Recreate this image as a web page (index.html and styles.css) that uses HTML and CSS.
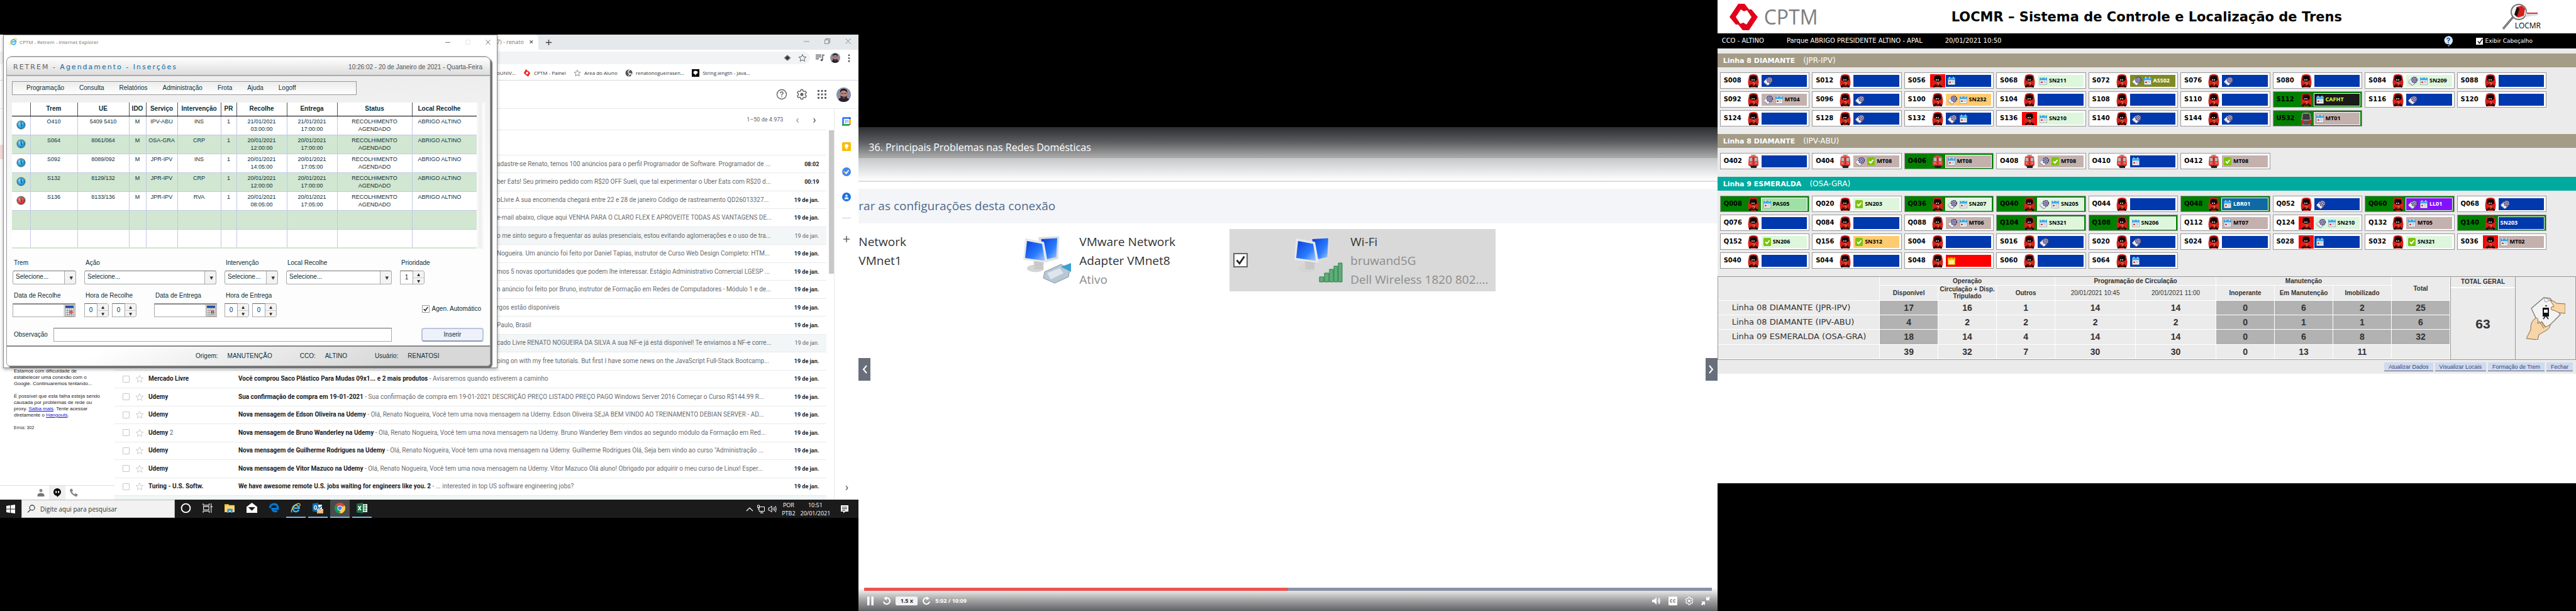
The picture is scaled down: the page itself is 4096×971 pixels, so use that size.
FILE: index.html
```html
<!DOCTYPE html>
<html lang="pt-BR">
<head>
<meta charset="utf-8">
<title>CCO Altino</title>
<link rel="stylesheet" href="styles.css">
</head>
<body>
<svg class="defs" aria-hidden="true">
  <defs>
    <linearGradient id="gScreen" x1="0" y1="0" x2="1" y2="1"><stop offset="0" stop-color="#0a3fd8"/><stop offset=".6" stop-color="#2a7cff"/><stop offset="1" stop-color="#a9cbff"/></linearGradient>
    <radialGradient id="gBlue" cx=".4" cy=".35"><stop offset="0" stop-color="#8fe0ff"/><stop offset="1" stop-color="#1796dc"/></radialGradient>
    <radialGradient id="gRed" cx=".4" cy=".35"><stop offset="0" stop-color="#ff9a94"/><stop offset="1" stop-color="#e02a25"/></radialGradient>
  </defs>
  <symbol id="train" viewBox="0 0 18 21"><path d="M2 3Q3 0 9 0T16 3L17.500 12 17 18 15 21H3L1 18 .5 12Z" fill="#d8201a"/><path d="M4 3Q9 1 14 3L15 9Q9 14 3 9Z" fill="#160404"/><path d="M4 16H14L13 20H5Z" fill="#4d0a08"/><path d="M2 18H5V21H2ZM13 18H16V21H13Z" fill="#111"/><path d="M6 9H12" stroke="#eee" stroke-width="1.500" stroke-dasharray="2 1"/><path d="M7.500 13.500H10.500V17H8" stroke="#d98a52" stroke-width="1" fill="none"/></symbol>
  <symbol id="oldtrain" viewBox="0 0 18 21"><path d="M5 .5H13M9 0V2" stroke="#666"/><path d="M2 3Q9 0 16 3L17 12V17H1V12Z" fill="#e2463d"/><path d="M3 5H7V10H3ZM11 5H15V10H11Z" fill="#a9bfca"/><path d="M8 4H10V17H8Z" fill="#b3322b"/><path d="M2 17H16L14 19V21H5V19Z" fill="#26211f"/><path d="M3 13H6M12 13H15" stroke="#f5c0b8"/></symbol>
  <symbol id="greytrain" viewBox="0 0 18 21"><path d="M2 2Q9-1 16 2L17 12V18L15 21H3L1 18V12Z" fill="#8b8585"/><path d="M4 3H14L15 12H3Z" fill="#3a3838"/><path d="M1 13H5V19H1ZM13 13H17V19H13Z" fill="#d8211c"/><path d="M5 14H13V20H5Z" fill="#555"/></symbol>
  <symbol id="tool" viewBox="0 0 16 15"><path d="M0 9 7 2 14 8 7 15Z" fill="#ececf4" stroke="#777" stroke-width=".6"/><path d="M1 10.500 7 15 13 9.500" fill="none" stroke="#8a8a96"/><circle cx="10" cy="6" r="4.300" fill="#a79fd8" stroke="#3b3660" stroke-width="1.800" stroke-dasharray="2 1"/><circle cx="10" cy="6" r="1.500" fill="#f0f0ff" stroke="#37325c"/></symbol>
  <symbol id="cal" viewBox="0 0 12 13"><path d="M.5 2H11.500V12.500H.5Z" fill="#f1f4f6" stroke="#8b9aa3" stroke-width=".7"/><path d="M0 1.500H12V5.500H0Z" fill="#38a7e6"/><path d="M3 0V3M9 0V3" stroke="#dff3ff" stroke-width="1.200"/><path d="M2 7.500H5V10H2Z" fill="#e23a33"/><path d="M6 7.500H10M6 9.500H10" stroke="#aab4bb"/></symbol>
  <symbol id="ycal" viewBox="0 0 12 13"><path d="M.5 2H11.500V12.500H.5Z" fill="#ffe34a" stroke="#d99f00"/><path d="M0 1.500H12V5H0Z" fill="#f4b400"/><path d="M3 0V3M9 0V3" stroke="#6b5a2a" stroke-width="1.300"/><path d="M2 7.500H10M2 10H10M4.500 6V12M7.500 6V12" stroke="#fff7c0"/></symbol>
  <symbol id="check" viewBox="0 0 12 13"><rect width="12" height="13" rx="1.500" fill="#7cc30d"/><path d="M3 6.500 5.500 9 9.500 4" fill="none" stroke="#fff" stroke-width="2"/></symbol>
  <symbol id="star" viewBox="0 0 14 14"><path d="M7 1.500 8.700 5.300 12.800 5.700 9.700 8.400 10.600 12.400 7 10.300 3.400 12.400 4.300 8.400 1.200 5.700 5.300 5.300Z" fill="none" stroke="currentColor"/></symbol>
  <symbol id="clock" viewBox="0 0 16 16"><circle cx="8" cy="8" r="7" stroke="#5b7480" stroke-width="1.200"/><path d="M8 3.500V8L10 10" fill="none" stroke="#16323f" stroke-width="1.300"/><path d="M8 1.800V3M8 13V14.200M1.800 8H3M13 8H14.200" stroke="#16323f" stroke-width=".8"/></symbol>
  <symbol id="face" viewBox="0 0 24 24"><circle cx="12" cy="12" r="12" fill="#8d8fa6"/><path d="M3 20Q5 17 9 17H15Q19 17 21 20A12 12 0 0 1 3 20Z" fill="#26242f"/><ellipse cx="12" cy="11" rx="5.500" ry="8" fill="#b98575"/><path d="M6 10Q5 2 12 2T18 10Q17 5 12 5T6 10Z" fill="#17131a"/><path d="M6.500 13Q7 21 12 21T17.500 13Q16 16 12 15.500T6.500 13Z" fill="#2a1c1f"/><path d="M8 10H11M13 10H16" stroke="#2a1c1f"/><path d="M10 17.500H14" stroke="#c9877b"/></symbol>
  <symbol id="ie" viewBox="0 0 20 20"><path d="M15.500 13A6 6 0 1 1 16 10H6" fill="none" stroke="#3fb3ea" stroke-width="3"/><path d="M2.500 18C-1 15 8 1 16 1.500 18.500 2 18 5 17 6.500" fill="none" stroke="#f2c230" stroke-width="1.500"/></symbol>
  <symbol id="pcs" viewBox="0 0 40 40"><ellipse cx="13" cy="35" rx="9" ry="4" fill="#d5d5d5"/><path d="M11 27H22L21 36H12Z" fill="#c9c9c9"/><path d="M16 2 38 1 37 25 20 29Z" fill="#dcdcdc"/><path d="M19 4 36 3 35 23 22 26Z" fill="url(#gScreen)"/><path d="M2 3 22 7 26 29 0 26Z" fill="#e9e9e9"/><path d="M4 6 20 9 23 27 2 24Z" fill="url(#gScreen)"/></symbol>
  <symbol id="help" viewBox="0 0 18 18"><circle cx="9" cy="9" r="7.500" fill="none" stroke="#5f6368" stroke-width="1.400"/><path d="M6.800 7.200Q7 5 9 5T11.200 7Q11.200 8.200 9 9.500V10.800M9 12V13.400" fill="none" stroke="#5f6368" stroke-width="1.400"/></symbol>
  <symbol id="gear" viewBox="0 0 18 18"><path d="M7.500 1.500H10.500L11 3.700 12.600 4.600 14.700 3.900 16.200 6.500 14.500 8V10L16.200 11.500 14.700 14.100 12.600 13.400 11 14.300 10.500 16.500H7.500L7 14.300 5.400 13.400 3.300 14.100 1.800 11.500 3.500 10V8L1.800 6.500 3.300 3.900 5.400 4.600 7 3.700Z" fill="none" stroke="currentColor" stroke-width="1.400"/><circle cx="9" cy="9" r="2.600" fill="currentColor"/></symbol>
</svg>

<main class="wall">

<section class="pane left">
  <div class="desktop">
    <div class="tabs">
      <div class="tab"><span class="tabname">37) - renato</span><button class="bare tabx" aria-label="Fechar guia">✕</button></div>
      <button class="bare newtab" aria-label="Nova guia"><svg viewBox="0 0 12 12"><path d="M6 1V11M1 6H11" stroke="#444" stroke-width="1.500"/></svg></button>
      <div class="winbtns">
        <svg viewBox="0 0 10 10"><path d="M0 5.500H10" stroke="#888"/></svg>
        <svg viewBox="0 0 10 10"><path d="M.5 2.500H7.500V9.500H.5ZM2.500 2.500V.5H9.500V7.500H7.500" fill="none" stroke="#777"/></svg>
        <svg viewBox="0 0 10 10"><path d="M.5.5 9.500 9.500M9.500.5.5 9.500" stroke="#777"/></svg>
      </div>
    </div>
    <div class="omni">
      <div class="url">
        <svg viewBox="0 0 12 12"><path d="M6 1 11.500 6 6 11 .5 6Z" fill="#777"/><circle cx="6" cy="6" r="2.500" fill="#333"/><path d="M3 3 6 0 9 3M3 9 6 12 9 9" stroke="#fff" fill="none" stroke-width=".7"/></svg>
        <svg class="dark" viewBox="0 0 14 14"><use href="#star"/></svg>
      </div>
      <svg class="m" viewBox="0 0 14 12"><path d="M0 1.500H9M0 4.500H9M0 7.500H5M11 9V1.500H14" stroke="#555" stroke-width="1.400" fill="none"/><circle cx="9.500" cy="9.500" r="1.800" fill="#555"/></svg>
      <svg class="av"><use href="#face"/></svg>
      <svg class="dots" viewBox="0 0 4 14"><circle cx="2" cy="2" r="1.400"/><circle cx="2" cy="7" r="1.400"/><circle cx="2" cy="12" r="1.400"/></svg>
    </div>
    <nav class="marks">
      <a href="#">oUNIV...</a>
      <a href="#"><svg viewBox="0 0 14 14"><path d="M5 0 1 7 5 11H8L4.500 7 8 3ZM9 14 13 7 9 3H6L9.500 7 6 11Z" fill="#e22"/></svg>CPTM - Painel</a>
      <a href="#" class="gry"><svg><use href="#star"/></svg>Area do Aluno</a>
      <a href="#"><svg viewBox="0 0 14 14"><circle cx="7" cy="7" r="6.500" fill="#555"/><path d="M9 2Q5 3 6 6T9 8 6 12M10 8Q13 9 11 11" stroke="#fff" fill="none" stroke-width="1.500"/></svg>renatonogueirasen...</a>
      <a href="#"><svg viewBox="0 0 14 14"><path d="M0 0H14V14H0Z"/><path d="M3 6Q3 3 7 3T11 6Q11 8 8.500 8.500L7 12 6 9Q3 9 3 6Z" fill="#fff"/></svg>String.length - Java...</a>
    </nav>
    <div class="ghead">
      <svg><use href="#help"/></svg>
      <svg class="dark"><use href="#gear"/></svg>
      <svg viewBox="0 0 18 18"><g fill="#5f6368"><path d="M2 2H5V5H2ZM7.500 2H10.500V5H7.500ZM13 2H16V5H13ZM2 7.500H5V10.500H2ZM7.500 7.500H10.500V10.500H7.500ZM13 7.500H16V10.500H13ZM2 13H5V16H2ZM7.500 13H10.500V16H7.500ZM13 13H16V16H13Z"/></g></svg>
      <svg class="big"><use href="#face"/></svg>
    </div>
    <div class="gbody">
      <aside class="gside">
        <div class="inbox"></div>
        <div class="hang">
          <p>Estamos com dificuldade de estabelecer uma conexão com o Google. Continuaremos tentando...</p>
          <p>É possível que esta falha esteja sendo causada por problemas de rede ou proxy. <a href="#">Saiba mais</a>. Tente acessar diretamente o <a href="#">Hangouts</a>.</p>
          <p class="err">Erros: 302</p>
        </div>
        <div class="gtabs">
          <svg viewBox="0 0 14 14"><circle cx="7" cy="3.500" r="2.500" fill="#888"/><path d="M1.500 13V11Q1.500 7.500 7 7.500T12.500 11V13Z" fill="#777"/></svg>
          <span class="on"><svg viewBox="0 0 14 14"><circle cx="7" cy="6" r="6"/><path d="M6 11H10L7 14Z"/><path d="M4 4.500H6V7L4.800 8.300M8 4.500H10V7L8.800 8.300" fill="#fff" stroke="#fff" stroke-width=".5"/></svg></span>
          <svg viewBox="0 0 14 14"><path d="M2 1 4.500.5 6 4 4.500 5.500Q6 8.500 8.500 9.500L10 8 13.500 9.500 13 12Q12 13.500 10 13 3 10 1 3.500 1 2 2 1Z" fill="#888"/></svg>
        </div>
      </aside>
      <div class="mail">
        <div class="pager"><span>1–50 de 4.973</span><button class="bare lite" aria-label="Anterior">‹</button><button class="bare" aria-label="Próxima">›</button></div>
        <div class="blank"></div>
        <div class="rows">
          <div class="row under"><p>adastre-se Renato, temos 100 anúncios para o perfil Programador de Software. Programador de ...</p><time>08:02</time></div>
          <div class="row under"><p>ber Eats! Seu primeiro pedido com R$20 OFF Sueli, que tal experimentar o Uber Eats com R$20 d...</p><time>00:19</time></div>
          <div class="row under"><p>oLivre A sua encomenda chegará entre 22 e 28 de janeiro Código de rastreamento QD26013327...</p><time>19 de jan.</time></div>
          <div class="row under"><p>e-mail abaixo, clique aqui VENHA PARA O CLARO FLEX E APROVEITE TODAS AS VANTAGENS DE...</p><time>19 de jan.</time></div>
          <div class="row under read"><p>o me sinto seguro a frequentar as aulas presenciais, estou evitando aglomerações e o uso de tra...</p><time>19 de jan.</time></div>
          <div class="row under"><p>Nogueira. Um anúncio foi feito por Daniel Tapias, instrutor de Curso Web Design Completo: HTM...</p><time>19 de jan.</time></div>
          <div class="row under"><p>mos 5 novas oportunidades que podem lhe interessar. Estágio Administrativo Comercial LGESP ...</p><time>19 de jan.</time></div>
          <div class="row under"><p>n anúncio foi feito por Bruno, instrutor de Formação em Redes de Computadores - Módulo 1 e de...</p><time>19 de jan.</time></div>
          <div class="row under"><p>rgos estão disponíveis</p><time>19 de jan.</time></div>
          <div class="row under"><p>Paulo, Brasil</p><time>19 de jan.</time></div>
          <div class="row under read"><p>cado Livre RENATO NOGUEIRA DA SILVA A sua NF-e já está disponível! Te enviamos a NF-e corre...</p><time>19 de jan.</time></div>
          <div class="row under"><p>oing on with my free tutorials. But first I have some news on the JavaScript Full-Stack Bootcamp...</p><time>19 de jan.</time></div>
          <div class="row"><input type="checkbox" aria-label="Mercado Livre"><svg><use href="#star"/></svg><b>Mercado Livre</b><p><b>Você comprou Saco Plástico Para Mudas 09x1... e 2 mais produtos</b> - Avisaremos quando estiverem a caminho</p><time>19 de jan.</time></div>
          <div class="row"><input type="checkbox" aria-label="Udemy, confirmação"><svg><use href="#star"/></svg><b>Udemy</b><p><b>Sua confirmação de compra em 19-01-2021</b> - Sua confirmação de compra em 19-01-2021 DESCRIÇÃO PREÇO LISTADO PREÇO PAGO Windows Server 2016 Começar o Curso R$144.99 R...</p><time>19 de jan.</time></div>
          <div class="row"><input type="checkbox" aria-label="Udemy, Edson"><svg><use href="#star"/></svg><b>Udemy</b><p><b>Nova mensagem de Edson Oliveira na Udemy</b> - Olá, Renato Nogueira, Você tem uma nova mensagem na Udemy. Edson Oliveira SEJA BEM VINDO AO TREINAMENTO DEBIAN SERVER - AD...</p><time>19 de jan.</time></div>
          <div class="row"><input type="checkbox" aria-label="Udemy, Bruno"><svg><use href="#star"/></svg><b>Udemy <i>2</i></b><p><b>Nova mensagem de Bruno Wanderley na Udemy</b> - Olá, Renato Nogueira, Você tem uma nova mensagem na Udemy. Bruno Wanderley Bem vindos ao segundo módulo da Formação em Red...</p><time>19 de jan.</time></div>
          <div class="row"><input type="checkbox" aria-label="Udemy, Guilherme"><svg><use href="#star"/></svg><b>Udemy</b><p><b>Nova mensagem de Guilherme Rodrigues na Udemy</b> - Olá, Renato Nogueira, Você tem uma nova mensagem na Udemy. Guilherme Rodrigues Olá, Seja bem vindo ao curso "Administração ...</p><time>19 de jan.</time></div>
          <div class="row"><input type="checkbox" aria-label="Udemy, Vitor"><svg><use href="#star"/></svg><b>Udemy</b><p><b>Nova mensagem de Vitor Mazuco na Udemy</b> - Olá, Renato Nogueira, Você tem uma nova mensagem na Udemy. Vitor Mazuco Olá aluno! Obrigado por adquirir o meu curso de Linux! Esper...</p><time>19 de jan.</time></div>
          <div class="row"><input type="checkbox" aria-label="Turing"><svg><use href="#star"/></svg><b>Turing - U.S. Softw.</b><p><b>We have awesome remote U.S. jobs waiting for engineers like you. 2</b> - ... interested in top US software engineering jobs?</p><time>19 de jan.</time></div>
        </div>
      </div>
      <div class="scroll"><div class="thumb"></div></div>
      <aside class="apps">
        <svg viewBox="0 0 14 14"><path d="M0 1.500 1.500 0H11V14H0Z" fill="#4285f4"/><path d="M11 0H12.500L14 1.500V3H11Z" fill="#1967d2"/><path d="M11 3H14V11H11Z" fill="#fbbc04"/><path d="M0 11H11V14H1.500L0 12.500Z" fill="#34a853"/><path d="M11 11H14L11 14Z" fill="#ea4335"/><path d="M3 3H11V11H3Z" fill="#fff"/><path d="M4.500 5H6.500V9H4.500M5 7H6.500M8 5.500 9.200 5V9.500" fill="none" stroke="#4285f4" stroke-width=".9"/></svg>
        <svg viewBox="0 0 14 14"><rect width="14" height="14" rx="1.500" fill="#fbbc04"/><circle cx="7" cy="6" r="3" fill="#fff"/><path d="M5.500 8H8.500V9.500H5.500ZM5.500 10.300H8.500V11.300H5.500Z" fill="#fff"/></svg>
        <svg viewBox="0 0 14 14"><circle cx="7" cy="7" r="7" fill="#4285f4"/><circle cx="3.500" cy="7" r="1.500" fill="#fbbc04"/><path d="M5 8 6.500 9.500 10.500 4.500" fill="none" stroke="#fff" stroke-width="2"/></svg>
        <svg viewBox="0 0 14 14"><circle cx="7" cy="7" r="7" fill="#1a73e8"/><circle cx="7" cy="5" r="1.800" fill="#fff"/><path d="M3.500 10.500Q3.500 7.500 7 7.500T10.500 10.500Z" fill="#fff"/></svg>
        <hr>
        <svg viewBox="0 0 14 14"><path d="M7 2V12M2 7H12" stroke="#5f6368" stroke-width="1.500"/></svg>
        <button class="bare more" aria-label="Mostrar painel">›</button>
      </aside>
    </div>
    <footer class="task">
      <svg class="win" viewBox="0 0 14 14"><path d="M0 2 6 1V6.500H0ZM7 .9 14 0V6.500H7ZM0 7.500H6V13L0 12ZM7 7.500H14V14L7 13.100Z" fill="#fff"/></svg>
      <div class="find"><svg viewBox="0 0 12 12"><circle cx="7.500" cy="4.500" r="3.700" fill="none" stroke="#222"/><path d="M5 7.500 1 11.500" stroke="#222"/></svg><input type="text" aria-label="Pesquisar" value="Digite aqui para pesquisar"></div>
      <span class="ti"><svg viewBox="0 0 16 16"><circle cx="8" cy="8" r="6.500" fill="none" stroke="#fff" stroke-width="1.800"/></svg></span>
      <span class="ti"><svg viewBox="0 0 16 16"><path d="M1 1V3.500H10V1M1 15V12.500H10V15M1.500 5.500H9.500V10.500H1.500ZM13 1V15M12 6H15" fill="none" stroke="#fff"/></svg></span>
      <span class="ti"><svg viewBox="0 0 16 16"><path d="M0 2H6L7 3.500H15V14H0Z" fill="#f6c443"/><path d="M1 5H15V14H1Z" fill="#ffd869"/><path d="M4 9H12V15H9.500V12H6.500V15H4Z" fill="#3b97e0"/></svg></span>
      <span class="ti"><svg viewBox="0 0 16 16"><path d="M0 6 8 0 16 6V15H0Z" fill="#fff"/><path d="M2.500 6.500H13L8 12Z" fill="#1b1b1b"/></svg></span>
      <span class="ti"><svg viewBox="0 0 16 16"><path d="M2 8Q3 2 8.500 2T14 9H5.500Q6 14 13 12.500" fill="none" stroke="#0078d7" stroke-width="3"/></svg></span>
      <span class="ti run"><svg><use href="#ie"/></svg></span>
      <span class="ti run"><svg viewBox="0 0 17 17"><path d="M7 3H15V13H7Z" fill="#fff"/><path d="M8 6 11 9 15 5" stroke="#0072c6" fill="none" stroke-width="1.500"/><path d="M0 1.500 9 0V15L0 13.500Z" fill="#0072c6"/><ellipse cx="4.500" cy="7.500" rx="2" ry="2.800" fill="none" stroke="#fff" stroke-width="1.300"/><path d="M7 10H17V17H7Z" fill="#e9b06d"/><path d="M7 10 12 14.500 17 10" stroke="#fff" fill="none"/></svg></span>
      <span class="ti run act"><svg viewBox="0 0 16 16"><path d="M8 8 1 4A8 8 0 0 1 15 4Z" fill="#db4437"/><path d="M8 8V16A8 8 0 0 1 1 4Z" fill="#0f9d58"/><path d="M8 8 15 4A8 8 0 0 1 8 16Z" fill="#ffcd40"/><circle cx="8" cy="8" r="3.700" fill="#fff"/><circle cx="8" cy="8" r="2.900" fill="#4285f4"/></svg></span>
      <span class="ti run"><svg viewBox="0 0 16 16"><path d="M8 2H16V14H8Z" fill="#fff"/><path d="M10 4H15M10 6.500H15M10 9H15M10 11.500H15M12.500 3V13" stroke="#1e7145"/><path d="M0 1.500 9.500 0V16L0 14.500Z" fill="#1e7145"/><path d="M2.500 5 6.500 11M6.500 5 2.500 11" stroke="#fff" stroke-width="1.500"/></svg></span>
      <div class="tray">
        <svg viewBox="0 0 14 14"><path d="M2 10 7 5 12 10" fill="none" stroke="#fff" stroke-width="1.200"/></svg>
        <svg viewBox="0 0 14 14"><path d="M4 3.500H12.500V10.500H4ZM8 10.500V13M5.500 13H11M1.500 1H4.500V4.500H1.500ZM3 4.500V8" fill="none" stroke="#fff"/></svg>
        <svg viewBox="0 0 14 14"><path d="M1 5H3L6 2V12L3 9H1ZM8 5Q9 7 8 9M10 3.500Q12 7 10 10.500M12 2Q14.500 7 12 12" fill="none" stroke="#fff"/></svg>
        <span>POR<br>PTB2</span><span>10:51<br>20/01/2021</span>
        <svg viewBox="0 0 14 14"><path d="M1 1H13V11H8L5 13.500V11H1Z" fill="#fff"/><path d="M3 4H11M3 6.500H11M3 9H8" stroke="#222"/></svg>
      </div>
    </footer>

    <div class="dialog">
      <div class="dtitle"><svg><use href="#ie"/></svg><span>CPTM - Retrem - Internet Explorer</span>
        <div class="dbtns"><svg viewBox="0 0 10 10"><path d="M0 5.500H10" stroke="#555"/></svg><svg viewBox="0 0 10 10"><path d="M1 .5H9V9.500H1Z" fill="none" stroke="#ddd"/></svg><svg viewBox="0 0 10 10"><path d="M.5.5 9.500 9.500M9.500.5.5 9.500" stroke="#555"/></svg></div>
      </div>
      <div class="panel">
        <header class="phead"><h1>RETREM - <em>Agendamento - Inserções</em></h1><span>10:26:02 - 20 de Janeiro de 2021 - Quarta-Feira</span></header>
        <nav class="menu"><a href="#">Programação</a><a href="#">Consulta</a><a href="#">Relatórios</a><a href="#">Administração</a><a href="#">Frota</a><a href="#">Ajuda</a><a href="#">Logoff</a></nav>
        <div class="grid">
          <table>
            <colgroup><col class="c1"><col class="c2"><col class="c3"><col class="c4"><col class="c5"><col class="c6"><col class="c7"><col class="c8"><col class="c8"><col class="c9"><col></colgroup>
            <thead><tr><th></th><th>Trem</th><th>UE</th><th>IDO</th><th>Serviço</th><th>Intervenção</th><th>PR</th><th>Recolhe</th><th>Entrega</th><th>Status</th><th>Local Recolhe</th></tr></thead>
            <tbody>
              <tr><td><svg fill="url(#gBlue)"><use href="#clock"/></svg></td><td>O410</td><td>5409 5410</td><td>M</td><td>IPV-ABU</td><td>INS</td><td>1</td><td>21/01/2021<br>03:00:00</td><td>21/01/2021<br>17:00:00</td><td>RECOLHIMENTO<br>AGENDADO</td><td>ABRIGO ALTINO</td></tr>
              <tr><td><svg fill="url(#gBlue)"><use href="#clock"/></svg></td><td>S064</td><td>8061/064</td><td>M</td><td>OSA-GRA</td><td>CRP</td><td>1</td><td>20/01/2021<br>12:00:00</td><td>20/01/2021<br>17:00:00</td><td>RECOLHIMENTO<br>AGENDADO</td><td>ABRIGO ALTINO</td></tr>
              <tr><td><svg fill="url(#gBlue)"><use href="#clock"/></svg></td><td>S092</td><td>8089/092</td><td>M</td><td>JPR-IPV</td><td>INS</td><td>1</td><td>20/01/2021<br>14:05:00</td><td>20/01/2021<br>17:05:00</td><td>RECOLHIMENTO<br>AGENDADO</td><td>ABRIGO ALTINO</td></tr>
              <tr><td><svg fill="url(#gBlue)"><use href="#clock"/></svg></td><td>S132</td><td>8129/132</td><td>M</td><td>JPR-IPV</td><td>CRP</td><td>1</td><td>20/01/2021<br>12:00:00</td><td>20/01/2021<br>17:00:00</td><td>RECOLHIMENTO<br>AGENDADO</td><td>ABRIGO ALTINO</td></tr>
              <tr><td><svg fill="url(#gRed)"><use href="#clock"/></svg></td><td>S136</td><td>8133/136</td><td>M</td><td>JPR-IPV</td><td>RVA</td><td>1</td><td>20/01/2021<br>08:05:00</td><td>20/01/2021<br>17:05:00</td><td>RECOLHIMENTO<br>AGENDADO</td><td>ABRIGO ALTINO</td></tr>
              <tr><td></td><td></td><td></td><td></td><td></td><td></td><td></td><td></td><td></td><td></td><td></td></tr>
              <tr><td></td><td></td><td></td><td></td><td></td><td></td><td></td><td></td><td></td><td></td><td></td></tr>
            </tbody>
          </table>
        </div>
        <form class="form">
          <div class="fields">
            <div class="f"><label for="trem">Trem</label><div class="sel"><select id="trem"><option>Selecione...</option></select></div></div>
            <div class="f two"><label for="acao">Ação</label><div class="sel"><select id="acao"><option>Selecione...</option></select></div></div>
            <div class="f"><label for="interv">Intervenção</label><div class="sel"><select id="interv"><option>Selecione...</option></select></div></div>
            <div class="f"><label for="local">Local Recolhe</label><div class="sel"><select id="local"><option>Selecione...</option></select></div></div>
            <div class="f"><label for="prio">Prioridade</label><div class="sp"><input id="prio" type="text" value="1"><span class="ud"><button type="button">▲</button><button type="button">▼</button></span></div></div>
            <div class="f"><label for="dr">Data de Recolhe</label><div class="date"><input id="dr" type="text"><button type="button" aria-label="Calendário"><svg viewBox="0 0 14 17"><path d="M0 0H14V17H0Z" fill="#aaa"/><path d="M1 1H13V4H1Z" fill="#1c4aa8"/><path d="M1 5H13V16H1Z" fill="#e6e6e6"/><path d="M4 5V16M7 5V16M10 5V16M1 8H13M1 11H13M1 14H13" stroke="#888" stroke-width=".7"/><path d="M8 9H11V12H8Z" fill="none" stroke="#e11"/></svg></button></div></div>
            <div class="f"><label for="hr">Hora de Recolhe</label><div class="pair"><div class="sp"><input id="hr" type="text" value="0"><span class="ud"><button type="button">▲</button><button type="button">▼</button></span></div><div class="sp"><input type="text" value="0" aria-label="Minuto de Recolhe"><span class="ud"><button type="button">▲</button><button type="button">▼</button></span></div></div></div>
            <div class="f"><label for="de">Data de Entrega</label><div class="date"><input id="de" type="text"><button type="button" aria-label="Calendário"><svg viewBox="0 0 14 17"><path d="M0 0H14V17H0Z" fill="#aaa"/><path d="M1 1H13V4H1Z" fill="#1c4aa8"/><path d="M1 5H13V16H1Z" fill="#e6e6e6"/><path d="M4 5V16M7 5V16M10 5V16M1 8H13M1 11H13M1 14H13" stroke="#888" stroke-width=".7"/><path d="M8 9H11V12H8Z" fill="none" stroke="#e11"/></svg></button></div></div>
            <div class="f"><label for="he">Hora de Entrega</label><div class="pair"><div class="sp"><input id="he" type="text" value="0"><span class="ud"><button type="button">▲</button><button type="button">▼</button></span></div><div class="sp"><input type="text" value="0" aria-label="Minuto de Entrega"><span class="ud"><button type="button">▲</button><button type="button">▼</button></span></div></div></div>
            <label class="auto"><input type="checkbox" checked>Agen. Automático</label>
          </div>
          <div class="obs"><label for="obs">Observação</label><input id="obs" type="text"><button type="button">Inserir</button></div>
        </form>
        <footer class="pfoot"><span>Origem:</span><span>MANUTENÇÃO</span><span>CCO:</span><span>ALTINO</span><span>Usuário:</span><span>RENATOSI</span></footer>
      </div>
    </div>
  </div>
</section>

<section class="pane mid">
  <div class="video">
    <div class="vtop"><h2>36. Principais Problemas nas Redes Domésticas</h2></div>
    <div class="vline"></div>
    <div class="vbar">rar as configurações desta conexão</div>
    <div class="nets">
      <div class="net n1"><p>Network<br>VMnet1</p></div>
      <div class="net n2">
        <svg viewBox="0 0 80 78"><use href="#pcs" x="0" y="0" width="64" height="60"/><path d="M36 58 62 46 76 54 74 66 52 76 34 68Z" fill="#b9c7d4" stroke="#8496a6"/><path d="M40 60 60 52 66 60 46 70Z" fill="#dde6ee"/><path d="M62 50 78 44V58Z" fill="#3d9fd0"/></svg>
        <p>VMware Network<br>Adapter VMnet8<br><i>Ativo</i></p></div>
      <div class="net n3">
        <input type="checkbox" checked aria-label="Wi-Fi">
        <svg viewBox="0 0 80 78"><use href="#pcs" x="0" y="0" width="64" height="60"/><path d="M42 66H49V74H42ZM50 60H57V74H50ZM58 54H64V74H58ZM65 49H71V74H65ZM72 44H78V74H72Z" fill="#5fae78" stroke="#2b7a48"/></svg>
        <p>Wi-Fi<br><i>bruwand5G</i><br><i>Dell Wireless 1820 802....</i></p></div>
    </div>
    <div class="sides"><button aria-label="Anterior"><svg viewBox="0 0 12 16"><path d="M9 2 4 8 9 14" fill="none" stroke="#fff" stroke-width="2"/></svg></button><button aria-label="Próximo"><svg viewBox="0 0 12 16"><path d="M3 2 8 8 3 14" fill="none" stroke="#fff" stroke-width="2"/></svg></button></div>
    <div class="ctl">
      <div class="prog"><div class="done"></div></div>
      <div class="cbar">
        <svg class="pause" viewBox="0 0 14 14"><path d="M2 0H5.500V14H2ZM8.500 0H12V14H8.500Z" fill="#fff"/></svg>
        <svg viewBox="0 0 14 14"><path d="M4 3A5 5 0 1 1 2 8" fill="none" stroke="#fff" stroke-width="2"/><path d="M7 0V6L2 3Z" fill="#fff"/></svg>
        <button class="rate">1.5 x</button>
        <svg viewBox="0 0 14 14"><path d="M10 3A5 5 0 1 0 12 8" fill="none" stroke="#fff" stroke-width="2"/><path d="M7 0V6L12 3Z" fill="#fff"/></svg>
        <b>5:02 / 10:09</b>
        <div class="cright">
          <svg viewBox="0 0 14 14"><path d="M0 5H3L7 1V13L3 9H0Z" fill="#fff"/><path d="M9 4.500Q11 7 9 9.500M10.500 2Q14 7 10.500 12" fill="none" stroke="#fff" stroke-width="1.400"/></svg>
          <svg viewBox="0 0 14 14"><rect y="0" width="14" height="14" rx="1.500" fill="#fff"/><path d="M6 5.500Q3 4 3 7T6 8.500M11 5.500Q8 4 8 7T11 8.500" fill="none" stroke="#777" stroke-width="1.300"/></svg>
          <svg class="wht" viewBox="0 0 18 18"><use href="#gear"/></svg>
          <svg viewBox="0 0 14 14"><path d="M8 0V6H14L12 4.500 14 1.500 12.500 0 9.800 2ZM6 14V8H0L2 9.500 0 12.500 1.500 14 4.200 12Z" fill="#fff"/></svg>
        </div>
      </div>
    </div>
  </div>
</section>

<section class="pane right">
  <div class="loc">
    <header class="lhead">
      <div class="logo"><svg viewBox="0 0 45 42"><path d="M14 0H24L31 9 23 12 18 9 10 21 18 33H10L0 21Z" fill="#e2001a"/><path d="M31 42H21L14 33 22 30 27 33 35 21 27 9H35L45 21Z" fill="#e2001a"/></svg><span>CPTM</span></div>
      <h1>LOCMR – Sistema de Controle e Localização de Trens</h1>
      <div class="lens"><svg viewBox="0 0 62 42"><path d="M18 21 2 40" stroke="#444" stroke-width="3"/><path d="M18 21 2 40" stroke="#ddd" stroke-width="1"/><circle cx="27" cy="13" r="12" fill="#f4f4f4" stroke="#777" stroke-width="2"/><path d="M20 17 24 5 32 3 37 8 35 19 26 22Z" fill="#d41f1a"/><path d="M20 17 24 5 28 8 24 21Z" fill="#1b1011"/><path d="M39 14H57L58 18 37 21Z" fill="#ddd"/><path d="M40 15H57" stroke="#d33" stroke-width="2"/></svg><span>LOCMR</span></div>
    </header>
    <div class="lbar"><span>CCO - ALTINO</span><span>Parque ABRIGO PRESIDENTE ALTINO - APAL</span><span>20/01/2021 10:50</span><span class="grow"></span>
      <svg viewBox="0 0 16 17"><path d="M8 0A7.500 7.500 0 1 1 7 15L9 17 10 14Z" fill="#cfe6ff"/><circle cx="8" cy="7" r="6.500" fill="#d8ebff"/><path d="M6 5.500Q6 3.500 8 3.500T10 5.500Q10 6.500 8 7.500V9M8 10V11.500" stroke="#1a4a9c" stroke-width="1.600" fill="none"/></svg>
      <label><input type="checkbox" checked>Exibir Cabeçalho</label></div>

    <section class="line">
      <h2>Linha 8 DIAMANTE <span>(JPR-IPV)</span></h2>
      <div class="cars">
        <div class="car"><b>S008</b><svg><use href="#train"/></svg><span><svg class="t"><use href="#tool"/></svg></span></div>
        <div class="car"><b>S012</b><svg><use href="#train"/></svg><span></span></div>
        <div class="car hot"><b>S056</b><svg><use href="#train"/></svg><span><svg><use href="#cal"/></svg></span></div>
        <div class="car"><b>S068</b><svg><use href="#train"/></svg><span class="mint"><svg><use href="#cal"/></svg>SN211</span></div>
        <div class="car"><b>S072</b><svg><use href="#train"/></svg><span class="olive"><svg class="t"><use href="#tool"/></svg><svg><use href="#cal"/></svg>ASS02</span></div>
        <div class="car"><b>S076</b><svg><use href="#train"/></svg><span><svg class="t"><use href="#tool"/></svg></span></div>
        <div class="car"><b>S080</b><svg><use href="#train"/></svg><span></span></div>
        <div class="car"><b>S084</b><svg><use href="#train"/></svg><span class="mint"><svg class="t"><use href="#tool"/></svg><svg><use href="#cal"/></svg>SN209</span></div>
        <div class="car"><b>S088</b><svg><use href="#train"/></svg><span></span></div>
        <div class="car"><b>S092</b><svg><use href="#train"/></svg><span class="tan"><svg class="t"><use href="#tool"/></svg><svg><use href="#cal"/></svg>MT04</span></div>
        <div class="car"><b>S096</b><svg><use href="#train"/></svg><span><svg class="t"><use href="#tool"/></svg></span></div>
        <div class="car"><b>S100</b><svg><use href="#train"/></svg><span class="amber"><svg class="t"><use href="#tool"/></svg><svg><use href="#cal"/></svg>SN232</span></div>
        <div class="car"><b>S104</b><svg><use href="#train"/></svg><span></span></div>
        <div class="car"><b>S108</b><svg><use href="#train"/></svg><span></span></div>
        <div class="car"><b>S110</b><svg><use href="#train"/></svg><span></span></div>
        <div class="car go"><b>S112</b><svg><use href="#train"/></svg><span class="black"><svg><use href="#cal"/></svg>CAFHT</span></div>
        <div class="car"><b>S116</b><svg><use href="#train"/></svg><span><svg class="t"><use href="#tool"/></svg></span></div>
        <div class="car"><b>S120</b><svg><use href="#train"/></svg><span></span></div>
        <div class="car"><b>S124</b><svg><use href="#train"/></svg><span></span></div>
        <div class="car"><b>S128</b><svg><use href="#train"/></svg><span><svg class="t"><use href="#tool"/></svg></span></div>
        <div class="car"><b>S132</b><svg><use href="#train"/></svg><span><svg class="t"><use href="#tool"/></svg><svg><use href="#cal"/></svg></span></div>
        <div class="car hot"><b>S136</b><svg><use href="#train"/></svg><span class="mint"><svg><use href="#cal"/></svg>SN210</span></div>
        <div class="car"><b>S140</b><svg><use href="#train"/></svg><span><svg class="t"><use href="#tool"/></svg></span></div>
        <div class="car"><b>S144</b><svg><use href="#train"/></svg><span><svg class="t"><use href="#tool"/></svg></span></div>
        <div class="car go"><b>U532</b><svg><use href="#greytrain"/></svg><span class="tan"><svg><use href="#cal"/></svg>MT01</span></div>
      </div>
    </section>
    <section class="line">
      <h2>Linha 8 DIAMANTE <span>(IPV-ABU)</span></h2>
      <div class="cars">
        <div class="car"><b>O402</b><svg><use href="#oldtrain"/></svg><span></span></div>
        <div class="car"><b>O404</b><svg><use href="#oldtrain"/></svg><span class="tan"><svg class="t"><use href="#tool"/></svg><svg><use href="#check"/></svg>MT08</span></div>
        <div class="car go"><b>O406</b><svg><use href="#oldtrain"/></svg><span class="tan"><svg><use href="#cal"/></svg>MT08</span></div>
        <div class="car"><b>O408</b><svg><use href="#oldtrain"/></svg><span class="tan"><svg class="t"><use href="#tool"/></svg><svg><use href="#check"/></svg>MT08</span></div>
        <div class="car"><b>O410</b><svg><use href="#oldtrain"/></svg><span><svg><use href="#cal"/></svg></span></div>
        <div class="car"><b>O412</b><svg><use href="#oldtrain"/></svg><span class="tan"><svg><use href="#check"/></svg>MT08</span></div>
      </div>
    </section>
    <section class="line teal">
      <h2>Linha 9 ESMERALDA <span>(OSA-GRA)</span></h2>
      <div class="cars">
        <div class="car go"><b>Q008</b><svg><use href="#train"/></svg><span class="leaf"><svg><use href="#cal"/></svg>PAS05</span></div>
        <div class="car"><b>Q020</b><svg><use href="#train"/></svg><span class="mint"><svg><use href="#check"/></svg>SN203</span></div>
        <div class="car go"><b>Q036</b><svg><use href="#train"/></svg><span class="mint"><svg class="t"><use href="#tool"/></svg><svg><use href="#cal"/></svg>SN207</span></div>
        <div class="car go"><b>Q040</b><svg><use href="#train"/></svg><span class="mint"><svg class="t"><use href="#tool"/></svg><svg><use href="#cal"/></svg>SN205</span></div>
        <div class="car"><b>Q044</b><svg><use href="#train"/></svg><span></span></div>
        <div class="car go"><b>Q048</b><svg><use href="#train"/></svg><span class="azure"><svg><use href="#cal"/></svg>LBR01</span></div>
        <div class="car"><b>Q052</b><svg><use href="#train"/></svg><span><svg class="t"><use href="#tool"/></svg></span></div>
        <div class="car go"><b>Q060</b><svg><use href="#train"/></svg><span class="violet"><svg class="t"><use href="#tool"/></svg><svg><use href="#cal"/></svg>LL01</span></div>
        <div class="car"><b>Q068</b><svg><use href="#train"/></svg><span><svg class="t"><use href="#tool"/></svg></span></div>
        <div class="car"><b>Q076</b><svg><use href="#train"/></svg><span></span></div>
        <div class="car"><b>Q084</b><svg><use href="#train"/></svg><span></span></div>
        <div class="car"><b>Q088</b><svg><use href="#train"/></svg><span class="tan"><svg class="t"><use href="#tool"/></svg><svg><use href="#cal"/></svg>MT06</span></div>
        <div class="car go"><b>Q104</b><svg><use href="#train"/></svg><span class="mint"><svg><use href="#cal"/></svg>SN321</span></div>
        <div class="car go"><b>Q108</b><svg><use href="#train"/></svg><span class="mint"><svg><use href="#cal"/></svg>SN206</span></div>
        <div class="car"><b>Q112</b><svg><use href="#train"/></svg><span class="tan"><svg><use href="#cal"/></svg>MT07</span></div>
        <div class="car hot"><b>Q124</b><svg><use href="#train"/></svg><span class="mint"><svg class="t"><use href="#tool"/></svg><svg><use href="#cal"/></svg>SN210</span></div>
        <div class="car"><b>Q132</b><svg><use href="#train"/></svg><span class="tan"><svg><use href="#cal"/></svg>MT05</span></div>
        <div class="car go"><b>Q140</b><svg><use href="#train"/></svg><span>SN203</span></div>
        <div class="car"><b>Q152</b><svg><use href="#train"/></svg><span class="mint"><svg><use href="#check"/></svg>SN206</span></div>
        <div class="car"><b>Q156</b><svg><use href="#train"/></svg><span class="amber"><svg><use href="#check"/></svg>SN312</span></div>
        <div class="car"><b>S004</b><svg><use href="#train"/></svg><span></span></div>
        <div class="car"><b>S016</b><svg><use href="#train"/></svg><span><svg class="t"><use href="#tool"/></svg></span></div>
        <div class="car"><b>S020</b><svg><use href="#train"/></svg><span><svg class="t"><use href="#tool"/></svg></span></div>
        <div class="car"><b>S024</b><svg><use href="#train"/></svg><span></span></div>
        <div class="car hot"><b>S028</b><svg><use href="#train"/></svg><span><svg><use href="#cal"/></svg></span></div>
        <div class="car"><b>S032</b><svg><use href="#train"/></svg><span class="mint"><svg><use href="#check"/></svg>SN321</span></div>
        <div class="car hot"><b>S036</b><svg><use href="#train"/></svg><span class="tan"><svg><use href="#cal"/></svg>MT02</span></div>
        <div class="car"><b>S040</b><svg><use href="#train"/></svg><span></span></div>
        <div class="car"><b>S044</b><svg><use href="#train"/></svg><span></span></div>
        <div class="car"><b>S048</b><svg><use href="#train"/></svg><span class="red"><svg><use href="#ycal"/></svg></span></div>
        <div class="car"><b>S060</b><svg><use href="#train"/></svg><span></span></div>
        <div class="car"><b>S064</b><svg><use href="#train"/></svg><span><svg><use href="#cal"/></svg></span></div>
      </div>
    </section>

    <div class="sum">
      <table>
        <colgroup><col class="w1"><col><col><col><col class="w2"><col class="w2"><col><col><col><col></colgroup>
        <thead>
          <tr><th rowspan="2"></th><th colspan="3">Operação</th><th colspan="2">Programação de Circulação</th><th colspan="3">Manutenção</th><th rowspan="2">Total</th></tr>
          <tr><th>Disponível</th><th>Circulação + Disp. Tripulado</th><th>Outros</th><th>20/01/2021 10:45</th><th>20/01/2021 11:00</th><th>Inoperante</th><th>Em Manutenção</th><th>Imobilizado</th></tr>
        </thead>
        <tbody>
          <tr><th>Linha 08 DIAMANTE (JPR-IPV)</th><td class="g">17</td><td>16</td><td>1</td><td>14</td><td>14</td><td class="g">0</td><td class="g">6</td><td class="g">2</td><td class="g">25</td></tr>
          <tr><th>Linha 08 DIAMANTE (IPV-ABU)</th><td class="g">4</td><td>2</td><td>2</td><td>2</td><td>2</td><td class="g">0</td><td class="g">1</td><td class="g">1</td><td class="g">6</td></tr>
          <tr><th>Linha 09 ESMERALDA (OSA-GRA)</th><td class="g">18</td><td>14</td><td>4</td><td>14</td><td>14</td><td class="g">0</td><td class="g">6</td><td class="g">8</td><td class="g">32</td></tr>
          <tr><th></th><td>39</td><td>32</td><td>7</td><td>30</td><td>30</td><td>0</td><td>13</td><td>11</td><td></td></tr>
        </tbody>
      </table>
      <div class="tot"><span>TOTAL GERAL</span><b>63</b></div>
      <div class="hand"><svg viewBox="0 0 62 68"><path d="M8 18 28 1 38 2 54 28 32 50 20 44Z" fill="#f3f3f3" stroke="#777" stroke-width="1.300"/><path d="M28 1 30 8 38 5Z" fill="#fff" stroke="#999"/><path d="M26 17H36V31H26Z" fill="#111"/><path d="M28 20H34V25H28Z" fill="#f3f3f3"/><path d="M30 14H33M27 35 30 31M35 35 32 31" stroke="#111" stroke-width="1.500"/><path d="M38 5Q44 6 48 10L62 11V26L52 25 44 21Q38 22 40 16L44 15Z" fill="#f7d5a8" stroke="#8a6a3d"/><path d="M0 66 7 52Q6 38 16 33 20 34 18 42L24 40 30 48 38 44Q38 50 30 54L20 60 18 68Z" fill="#f7d5a8" stroke="#8a6a3d"/><path d="M20 38 28 50M24 38 31 48" stroke="#8a6a3d"/></svg></div>
    </div>
    <div class="acts"><button>Atualizar Dados</button><button>Visualizar Locais</button><button>Formação de Trem</button><button>Fechar</button></div>
  </div>
</section>

</main>
</body>
</html>
```
FILE: styles.css
```css
* { box-sizing: border-box; }
body { margin: 0; background: #000; font: 10px/12px "Liberation Sans", Arial, sans-serif; color: #222; }
h1, h2, p { margin: 0; font-weight: 400; }
svg { display: block; flex: none; }
button, input, select { font: inherit; color: inherit; margin: 0; padding: 0; border: 0; border-radius: 0; }
input[type="checkbox"] { appearance: none; flex: none; }
a { color: inherit; text-decoration: none; }
.defs { position: absolute; width: 0; height: 0; }
.bare { background: none; }
.grow { flex: 1; }
.dark { color: #5f6368; }

.wall { display: grid; grid-template-columns: 1fr 1fr 1fr; min-height: 100vh; }
.pane { display: grid; min-width: 0; }
.left { grid-template-rows: 55px 1fr 148px; }
.left .desktop { grid-row: 2; }
.mid { grid-template-rows: 202px 1fr; }
.mid .video { grid-row: 2; }
.right { grid-template-rows: 1fr 203px; }

/* browser window */
.desktop { position: relative; display: flex; flex-direction: column; background: #fff; overflow: hidden; font-family: Roboto, sans-serif; }
.tabs { display: flex; height: 24px; background: #e5e9ec; align-items: center; }
.tab { width: 856px; height: 24px; background: #fff; border-radius: 0 6px 0 0; display: flex; align-items: center; justify-content: flex-end; gap: 7px; padding-right: 7px; font-family: "Open Sans", sans-serif; color: #777; }
.tabname { font-size: 9px; }
.tabx { width: 9px; font-size: 9px; color: #333; }
.newtab { width: 32px; display: grid; place-items: center; }
.newtab svg { width: 11px; }
.winbtns { margin-left: auto; display: flex; gap: 24px; padding: 0 12px 4px 0; }
.winbtns svg { width: 9px; height: 9px; }
.omni { display: flex; height: 26px; align-items: center; padding-right: 13px; }
.url { flex: 1; height: 20px; background: #f1f3f4; border-radius: 0 10px 10px 0; display: flex; align-items: center; justify-content: flex-end; gap: 11px; padding-right: 5px; margin-right: 9px; }
.url svg { width: 12px; height: 12px; }
.url .dark { width: 14px; height: 14px; }
.m { width: 14px; height: 12px; margin-right: 9px; }
.av { width: 16px; height: 16px; margin-right: 12px; }
.dots { width: 4px; height: 13px; fill: #444; }
.marks { display: flex; height: 23px; align-items: center; padding-left: 790px; gap: 12px; border-bottom: 1px solid #d5d8da; font: 8px/12px "Open Sans", sans-serif; color: #333; }
.marks a { display: flex; align-items: center; gap: 5px; }
.marks svg { width: 12px; height: 12px; }
.gry svg { color: #777; }
.ghead { display: flex; height: 45px; align-items: center; justify-content: flex-end; gap: 14px; padding-right: 12px; border-bottom: 1px solid #e8e8e8; }
.ghead svg { width: 18px; height: 18px; }
.ghead .big { width: 23px; height: 23px; }
.gbody { flex: 1; display: flex; min-height: 0; }
.gside { width: 182px; display: flex; flex-direction: column; }
.inbox { height: 23px; margin-top: 57px; background: #f8dedc; }
.hang { margin-top: auto; height: 186px; padding: 0 0 0 22px; width: 162px; font: 8px/10px "Liberation Sans", sans-serif; color: #222; }
.hang p { margin-bottom: 10px; }
.hang a { color: #1414d2; text-decoration: underline; }
.hang .err { font-size: 7px; }
.gtabs { height: 23px; border-top: 1px solid #ddd; display: flex; align-items: center; padding-left: 58px; gap: 12px; }
.gtabs svg { width: 14px; height: 14px; }
.gtabs .on { background: #efefef; height: 23px; width: 26px; display: grid; place-items: center; margin: 0 -6px; }
.mail { flex: 1; display: flex; flex-direction: column; min-width: 0; background: #f2f6f7; padding-bottom: 6px; margin-right: 4px; }
.pager { height: 34px; background: #fff; border-bottom: 1px solid #e8e8e8; display: flex; align-items: center; justify-content: flex-end; gap: 18px; padding-right: 15px; color: #5f6368; font-size: 9px; }
.pager .bare, .more { font-size: 18px; line-height: 18px; width: 9px; color: #555; }
.pager .lite { color: #999; }
.blank { height: 40px; background: #fff; border-bottom: 1px solid #e8e8e8; }
.rows { flex: 1; display: grid; grid-auto-rows: 1fr; }
.row { display: grid; grid-template-columns: 20px 21px 143px 1fr 69px; align-items: center; padding: 0 12px 0 13px; background: #fff; border-bottom: 1px solid #e8ebec; color: #202124; }
.row input { width: 11px; height: 11px; border: 1px solid #c6c6c6; border-radius: 1px; }
.row svg { width: 14px; height: 14px; color: #ccc; }
.row p { white-space: nowrap; overflow: hidden; color: #6a6d70; }
.row p b { color: #202124; }
.row i { font-style: normal; font-weight: 400; color: #5f6368; }
.row time { text-align: right; font-size: 9px; font-weight: 700; }
.under p { grid-column: 1 / 5; padding-left: 595px; }
.row.read { background: #f2f6f7; }
.read time { font-weight: 400; color: #5f6368; }
.scroll { width: 8px; padding-top: 34px; }
.thumb { height: 228px; background: #c8c8c8; }
.apps { width: 39px; border-left: 1px solid #e8e8e8; display: flex; flex-direction: column; align-items: center; padding: 13px 0 11px; gap: 26px; }
.apps svg { width: 14px; height: 14px; }
.apps hr { width: 14px; border: 0; border-top: 1px solid #ccc; margin: 0; height: 1px; }
.apps .more { margin-top: auto; }
.task { display: flex; height: 29px; background: #1b1b1b; color: #fff; align-items: stretch; }
.win { width: 14px; margin: 0 10px; align-self: center; }
.find { width: 244px; background: #f2f2f2; border: 1px solid #bbb; display: flex; align-items: center; gap: 8px; padding-left: 8px; margin-right: 2px; color: #333; font: 10px/14px "Open Sans", sans-serif; }
.find svg { width: 13px; height: 13px; }
.find input { background: none; flex: 1; }
.ti { width: 31px; margin-right: 4px; display: grid; place-items: center; border-bottom: 2px solid transparent; }
.ti svg { width: 17px; height: 17px; }
.run { border-color: #76b9ed; }
.act { background: #4a4a4a; }
.tray { margin-left: auto; display: flex; align-items: center; gap: 4px; padding-right: 15px; text-align: center; font: 9px/13px "Open Sans", sans-serif; }
.tray svg { width: 14px; height: 14px; }
.tray span { margin-left: 4px; }
.tray span + svg { margin-left: 12px; }

/* scheduling dialog */
.dialog { position: absolute; left: 5px; top: 0; width: 786px; height: 530px; background: #fff; border: 1px solid #8a8a8a; box-shadow: 0 2px 5px #0005; font-family: "Liberation Sans", Arial, sans-serif; color: #0b2f38; padding: 0 10px 4px 4px; }
.dtitle { display: flex; height: 33px; gap: 3px; padding: 0 0 12px 5px; align-items: center; font: 8px/12px "Open Sans", sans-serif; color: #777; }
.dtitle > svg { width: 13px; height: 13px; }
.dbtns { margin-left: auto; display: flex; gap: 24px; }
.dbtns svg { width: 8px; height: 8px; }
.panel { border: 1px solid #999; border-top: 2px solid #aaa; border-radius: 9px 9px 6px 6px; box-shadow: 3px 3px 1px #707070; background: linear-gradient(#ececec, #fdfdfd 60%); overflow: hidden; }
.phead { height: 30px; display: flex; align-items: center; justify-content: space-between; padding: 4px 12px 0 10px; background: linear-gradient(#fff, #dcdcdc); border-bottom: 2px solid #aaa; color: #555; font-size: 10px; }
.phead h1 { font: 11px/14px "DejaVu Sans", Verdana, sans-serif; letter-spacing: 2px; color: #666; }
.phead em { font-style: normal; color: #0b6aa0; }
.menu { margin: 8px 0 0 8px; width: 548px; height: 22px; display: flex; gap: 24px; align-items: center; padding-left: 22px; border: 1px solid #999; background: linear-gradient(#ececec, #fff); }
.grid { margin: 12px 8px 0; height: 232px; overflow: hidden; background: linear-gradient(90deg, #fff 98%, #eee 99%, #fff); }
.grid table { table-layout: fixed; width: 739px; border-collapse: collapse; font-size: 9px; text-align: center; background: #fff; border-bottom: 2px solid #d0e6d0; }
.c1 { width: 29px; } .c2 { width: 75px; } .c3 { width: 82px; } .c4 { width: 27px; } .c5 { width: 50px; } .c6 { width: 69px; } .c7 { width: 25px; } .c8 { width: 80px; } .c9 { width: 119px; }
.grid th { height: 21px; padding: 0; font-size: 10px; border-right: 1px solid #555; border-bottom: 1px solid #000; }
.grid th:last-child, .grid td:last-child { text-align: left; padding-left: 9px; border-right: 0; }
.grid td { height: 30px; padding: 2px 0 0; vertical-align: top; border-right: 1px solid #c0c8e4; border-bottom: 1px solid #c0c8e4; }
.grid tr:nth-child(even) td { background: #d2e7d2; }
.grid td svg { width: 15px; height: 15px; margin: 4px auto 0; }
.form { padding: 15px 10px 0 9px; }
.fields { display: grid; grid-template-columns: 101px 98px 99px 85px 168px 1fr; column-gap: 13px; row-gap: 10px; }
.two { grid-column: span 2; }
.f { display: flex; flex-direction: column; gap: 4px; }
.f > label { line-height: 16px; padding-left: 2px; }
.sel { position: relative; display: flex; }
.sel select { appearance: none; flex: 1; height: 22px; padding: 0 0 2px 4px; background: linear-gradient(90deg, #fff 0 calc(100% - 18px), #aaa 0 calc(100% - 17px), #f3f3f3 0); border: 1px solid #a5abab; border-top-color: #777; border-radius: 3px; }
.sel::after { content: "▼"; position: absolute; right: 5px; top: 6px; font: 7px/12px "DejaVu Sans", sans-serif; color: #333; }
.sp { display: flex; width: 39px; height: 22px; }
.sp input { width: 21px; background: #fff; border: 1px solid #aaa; border-top-color: #666; text-align: center; }
.ud { flex: 1; display: grid; border: 1px solid #aaa; border-left: 0; border-radius: 0 4px 4px 0; overflow: hidden; }
.ud button { background: #f3f3f3; font: 6px/9px "DejaVu Sans", sans-serif; color: #222; }
.ud button + button { border-top: 1px solid #ccc; }
.pair { display: flex; gap: 5px; }
.date { display: flex; height: 22px; width: 100px; border: 1px solid #aaa; border-top: 2px solid #888; background: #fff; }
.date input { flex: 1; min-width: 0; background: none; }
.date button { width: 18px; background: #ddd; display: grid; place-items: center; }
.date svg { width: 15px; height: 18px; }
.auto { grid-column: 6; display: flex; gap: 4px; align-items: center; justify-content: flex-end; padding: 16px 4px 0 0; }
.auto input, .lbar input, .n3 input { background: #fff no-repeat center/80% url("data:image/svg+xml,%3Csvg xmlns='http://www.w3.org/2000/svg' viewBox='0 0 10 10'%3E%3Cpath d='M1 5 4 8.500 9 1' fill='none' stroke='%23222' stroke-width='1.800'/%3E%3C/svg%3E"); }
.auto input { width: 12px; height: 12px; border: 1px solid #999; }
.obs { display: flex; align-items: center; margin-top: 17px; }
.obs label { width: 65px; padding-left: 2px; }
.obs input { flex: 1; height: 22px; background: #fff; border: 1px solid #a5abab; border-top-color: #666; margin-right: 47px; }
.obs button { width: 99px; height: 22px; background: #eef1fa; border: 2px solid #bcc5de; border-bottom-color: #8c97b4; border-radius: 4px; }
.pfoot { margin-top: 6px; height: 32px; display: flex; align-items: center; padding-left: 300px; border-top: 2px solid #888; background: linear-gradient(160deg, #fff 20%, #d8d8d8 80%); }
.pfoot span:nth-child(odd) { margin-right: 15px; }
.pfoot span:nth-child(even) { margin-right: 44px; }

/* video player */
.video { position: relative; display: flex; flex-direction: column; background: #fff; font-family: "Open Sans", sans-serif; }
.vtop { height: 49px; background: linear-gradient(#2c2e31, #5d5e61 50%, #aaa); border-bottom: 1px solid #a2a2a2; padding: 18px 16px 0; }
.vtop h2 { font-size: 16px; line-height: 28px; color: #fff; }
.vline { height: 38px; background: linear-gradient(#c4c6c8, #fff); border-bottom: 2px solid #dcdcdc; }
.vbar { margin-top: 11px; height: 55px; background: #f4f5f8; color: #4f6a8a; font-size: 19px; line-height: 54px; }
.nets { display: flex; padding-top: 9px; font-size: 19px; line-height: 30px; color: #333; }
.nets i { font-style: normal; color: #8c8c8c; }
.nets svg { width: 80px; height: 78px; }
.nets p { white-space: nowrap; }
.net { display: flex; gap: 11px; height: 99px; padding-top: 5px; }
.n1 { width: 260px; }
.n2 { width: 330px; }
.n2 svg, .n3 svg { margin-top: 5px; }
.n3 { width: 423px; background: #d9d9d9; padding-left: 6px; }
.n3 input { width: 23px; height: 23px; background-color: #fff; border: 2px solid #666; margin: 33px 61px 0 0; }
.sides { flex: 1; display: flex; justify-content: space-between; align-items: flex-start; padding-top: 106px; }
.sides button { width: 19px; height: 36px; background: #686f7a; display: grid; place-items: center; }
.sides svg { width: 12px; height: 16px; }
.ctl { height: 46px; padding: 9px 9px 0; background: linear-gradient(#fff0 9px, #fff 9px, #a8a8a8 60%, #606266); }
.prog { height: 5px; background: #8a92a6; }
.done { width: 50%; height: 5px; background: #eb5252; }
.cbar { display: flex; align-items: center; gap: 7px; height: 32px; color: #fff; font-size: 9px; padding: 0 3px; }
.cbar svg { width: 14px; height: 14px; }
.pause { margin-right: 5px; }
.cright { margin-left: auto; display: flex; gap: 12px; }
.rate { width: 35px; height: 14px; background: #f2f2f2; color: #333; border-radius: 2px; font-weight: 700; }
.wht { color: #fff; }

/* train locator */
.loc { background: #fff; display: flex; flex-direction: column; font-family: "DejaVu Sans", Verdana, sans-serif; }
.lhead { display: flex; height: 53px; align-items: center; justify-content: space-between; padding: 0 56px 0 19px; }
.logo { display: flex; align-items: center; gap: 10px; width: 337px; font: 32px/40px "Open Sans", sans-serif; color: #7d7d7d; }
.logo svg { width: 45px; height: 42px; }
.lhead h1 { font-size: 21px; font-weight: 700; color: #000; white-space: nowrap; }
.lens { width: 300px; display: flex; justify-content: flex-end; position: relative; }
.lens svg { width: 62px; height: 42px; }
.lens span { position: absolute; right: 0; bottom: 0; font: 12px/14px "Open Sans", sans-serif; color: #000; }
.lbar { height: 24px; background: #000; color: #fff; display: flex; align-items: center; gap: 36px; padding: 0 69px 0 7px; font-size: 10px; }
.lbar svg { width: 16px; height: 17px; }
.lbar label { display: flex; align-items: center; gap: 3px; font-size: 9px; }
.lbar input { width: 11px; height: 11px; }
.line { background: #ebebeb; padding-top: 8px; }
.line + .line { padding-top: 0; }
.line h2 { height: 22px; line-height: 23px; background: #a49c87; color: #fff; font-size: 11px; font-weight: 700; padding-left: 9px; display: flex; gap: 13px; }
.line h2 span { font-size: 12px; font-weight: 400; }
.teal h2 { background: #00aa9e; }
.cars { display: grid; grid-template-columns: repeat(9, 1fr); gap: 4px; padding: 8px 47px 12px 4px; }
.car { height: 26px; display: grid; grid-template-columns: 34px 24px 1fr; column-gap: 1px; align-items: center; padding: 0 3px 0 5px; background: #fff; border: 1px solid #999; color: #000; font-size: 10px; }
.car > svg { width: 24px; height: 21px; padding: 0 3px; }
.car > span { height: 19px; background: #0038ad; color: #fff; display: flex; align-items: center; gap: 3px; padding-left: 3px; font: 700 9px/12px "Noto Sans", sans-serif; white-space: nowrap; }
.car span svg { width: 12px; height: 13px; }
.car span .t { width: 16px; height: 15px; }
.hot > svg { background: #f00; }
.go { background: #008000; }
.go > span { outline: 1px solid #fff; }
.car .mint { background: #ddf6dc; color: #000; }
.car .tan { background: #c4b1ae; color: #000; }
.car .amber { background: #ffcb70; color: #000; }
.car .leaf { background: #9fe0a5; color: #000; }
.car .olive { background: #7d8b22; }
.car .azure { background: #0e69a5; }
.car .violet { background: #8510ff; }
.car .black { background: #1a1a1a; color: #d6ff3c; }
.car .red { background: #f00; }
.sum { display: flex; background: #ebebeb; border: 1px solid #999; height: 133px; color: #333; font-family: "Liberation Sans", sans-serif; }
.sum table { flex: 1; table-layout: fixed; width: 100%; border-collapse: collapse; text-align: center; }
.w1 { width: 257px; } .w2 { width: 128px; }
.sum th, .sum td { padding: 0; border: 1px solid #fff; border-top: 0; border-left: 0; }
.sum thead th { height: 13px; font-size: 10px; line-height: 11px; }
.sum thead tr + tr th { height: 24px; }
.sum thead tr + tr th:nth-child(4), .sum thead tr + tr th:nth-child(5) { font-weight: 400; }
.sum td { height: 23px; font-size: 14px; font-weight: 700; }
.sum tbody th { text-align: left; padding-left: 22px; font: 13px/16px "DejaVu Sans", sans-serif; }
.g { background: #b2b2b2; }
.tot { width: 104px; border: solid #999; border-width: 0 1px; display: flex; flex-direction: column; text-align: center; font-weight: 700; }
.tot span { line-height: 16px; border-bottom: 2px solid #fff; }
.tot b { font-size: 21px; line-height: 114px; }
.hand { width: 95px; display: grid; place-items: center; }
.hand svg { width: 62px; height: 68px; }
.acts { display: flex; justify-content: flex-end; gap: 3px; padding: 4px 5px; background: #ebebeb; font-family: "Liberation Sans", sans-serif; }
.acts button { background: #cfdaef; color: #2f4779; border-bottom: 1px solid #5a5f77; height: 14px; padding: 0 7px; font-size: 9px; }
```
